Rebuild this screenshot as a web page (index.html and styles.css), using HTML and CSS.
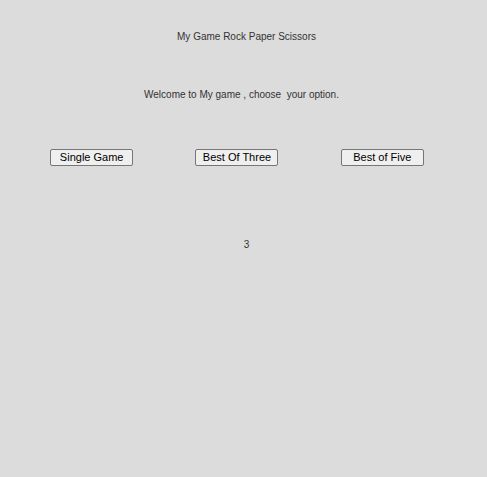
FILE: index.html
```html
<!DOCTYPE html>
<html>
<head>
<meta charset="utf-8">
<link rel="stylesheet" href="styles.css">
</head>
<body>
<div class="page">
  <h1 class="title">My Game Rock Paper Scissors</h1>
  <p class="welcome">Welcome to My game , choose &nbsp;your option.</p>
  <div class="options">
    <button class="opt">Single Game</button>
    <button class="opt">Best Of Three</button>
    <button class="opt">Best of Five</button>
  </div>
  <div class="count">3</div>
</div>
</body>
</html>
```
FILE: styles.css
```css
html, body {
  margin: 0;
  padding: 0;
  background: #dcdcdc;
}
body {
  font-family: "Liberation Sans", Arial, sans-serif;
  color: #333;
  height: 477px;
}
.page {
  display: flex;
  flex-direction: column;
  align-items: center;
  padding-top: 30px;
}
.title {
  font-size: 10px;
  font-weight: normal;
  margin: 0;
  line-height: 13px;
  padding-left: 6px;
}
.welcome {
  font-size: 10px;
  margin: 45px 0 0 0;
  line-height: 13px;
  padding-right: 4px;
}
.options {
  align-self: flex-start;
  margin-left: 19px;
  margin-top: 48px;
  width: 436px;
  display: flex;
  justify-content: space-around;
}
.opt {
  width: 83px;
  height: 17px;
  padding: 0;
  font-family: "Liberation Sans", Arial, sans-serif;
  font-size: 11px;
  line-height: 15px;
  color: #000;
  background: #efefef;
  border: 1px solid #767676;
  border-radius: 2px;
}
.count {
  font-size: 10px;
  margin-top: 72px;
  line-height: 13px;
  padding-left: 6px;
}
```
